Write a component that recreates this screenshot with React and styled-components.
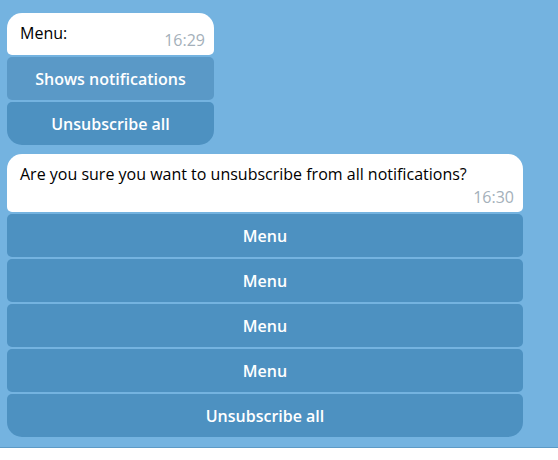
import React from 'react';
import styled, { createGlobalStyle } from 'styled-components';

const GlobalStyle = createGlobalStyle`
  html, body {
    margin: 0;
    padding: 0;
    background: #ffffff;
  }
  body {
    font-family: 'Open Sans', 'Liberation Sans', sans-serif;
  }
`;

const Chat = styled.div`
  background: #74b3e0;
  height: 448px;
  border-bottom: 1px solid #5c9ac6;
  padding: 13px 0 0 7px;
  box-sizing: border-box;
  display: flex;
  flex-direction: column;
  gap: 9px;
`;

const Group = styled.div`
  width: ${p => p.width}px;
  display: flex;
  flex-direction: column;
  gap: 2px;
`;

const Bubble = styled.div`
  background: #ffffff;
  border-radius: 15px 15px 5px 5px;
  padding: 10px 9px 5px 13px;
  display: flex;
  flex-wrap: wrap;
  align-items: flex-end;
  font-size: 16px;
`;

const Text = styled.span`
  color: #000000;
  line-height: 20px;
  margin-bottom: 7px;
`;

const Time = styled.span`
  color: #a4b0ba;
  line-height: 20px;
  margin-left: auto;
  padding-left: 20px;
  margin-top: -4px;
`;

const Button = styled.div`
  height: 43px;
  display: flex;
  align-items: center;
  justify-content: center;
  background: ${p => (p.hover ? '#5a99c7' : '#4d91c1')};
  color: #ffffff;
  font-size: 16px;
  font-weight: 600;
  border-radius: 5px;
  &:last-child {
    border-radius: 5px 5px 15px 15px;
  }
`;

const Message = ({ width, text, time, buttons }) => (
  <Group width={width}>
    <Bubble>
      <Text>{text}</Text>
      <Time>{time}</Time>
    </Bubble>
    {buttons.map((b, i) => (
      <Button key={i} hover={b.hover}>{b.label}</Button>
    ))}
  </Group>
);

export default function App() {
  return (
    <>
      <GlobalStyle />
      <Chat>
        <Message
          width={207}
          text="Menu:"
          time="16:29"
          buttons={[
            { label: 'Shows notifications', hover: true },
            { label: 'Unsubscribe all' },
          ]}
        />
        <Message
          width={516}
          text="Are you sure you want to unsubscribe from all notifications?"
          time="16:30"
          buttons={[
            { label: 'Menu' },
            { label: 'Menu' },
            { label: 'Menu' },
            { label: 'Menu' },
            { label: 'Unsubscribe all' },
          ]}
        />
      </Chat>
    </>
  );
}
